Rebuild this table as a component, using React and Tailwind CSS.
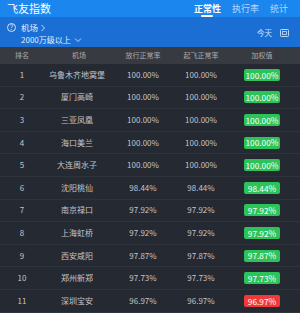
import React from "react";

const rows = [
  ["1", "乌鲁木齐地窝堡", "100.00%", "100.00%", "100.00%", "g"],
  ["2", "厦门高崎", "100.00%", "100.00%", "100.00%", "g"],
  ["3", "三亚凤凰", "100.00%", "100.00%", "100.00%", "g"],
  ["4", "海口美兰", "100.00%", "100.00%", "100.00%", "g"],
  ["5", "大连周水子", "100.00%", "100.00%", "100.00%", "g"],
  ["6", "沈阳桃仙", "98.44%", "98.44%", "98.44%", "g"],
  ["7", "南京禄口", "97.92%", "97.92%", "97.92%", "g"],
  ["8", "上海虹桥", "97.92%", "97.92%", "97.92%", "g"],
  ["9", "西安咸阳", "97.87%", "97.87%", "97.87%", "g"],
  ["10", "郑州新郑", "97.73%", "97.73%", "97.73%", "g"],
  ["11", "深圳宝安", "96.97%", "96.97%", "96.97%", "r"],
];

const font = { fontFamily: '"Noto Sans CJK SC", "Noto Sans", sans-serif' };

export default function App() {
  return (
    <div className="w-[300px] h-[313px] overflow-hidden bg-[#252932]" style={font}>
      <div className="h-[17px] bg-[#1c86ef] flex items-center pl-[7px] pr-[12px]">
        <div className="text-white text-[11px] leading-none">飞友指数</div>
        <div className="ml-auto flex items-center gap-[11px] text-[9px] leading-none">
          <div className="relative text-white font-bold">
            正常性
            <div className="absolute left-1/2 -translate-x-1/2 top-[11px] w-[12px] h-[2px] bg-white rounded" />
          </div>
          <div className="text-[#b9d7fb]">执行率</div>
          <div className="text-[#b9d7fb]">统计</div>
        </div>
      </div>
      <div className="h-[30px] bg-[#1b6fd4] flex pl-[7px] pr-[11px]">
        <div className="flex flex-col pt-[5px]">
          <div className="flex items-center h-[11px]">
            <div className="w-[9px] h-[9px] rounded-full border border-[#cfe2fb] text-[#cfe2fb] text-[7px] leading-none flex items-center justify-center">?</div>
            <span className="text-[#e3eefc] text-[8.5px] leading-none ml-[5px]">机场</span>
            <svg width="6" height="8" viewBox="0 0 6 8" className="ml-[2px]"><path d="M1.5 1 L4.5 4 L1.5 7" fill="none" stroke="#cfe2fb" strokeWidth="0.9" /></svg>
          </div>
          <div className="flex items-center gap-[3px] h-[11px] mt-[1px] pl-[14px]">
            <span className="text-[#e3eefc] text-[8px] leading-none">2000万级以上</span>
            <svg width="8" height="6" viewBox="0 0 8 6"><path d="M1 1.5 L4 4.5 L7 1.5" fill="none" stroke="#cfe2fb" strokeWidth="0.9" /></svg>
          </div>
        </div>
        <div className="ml-auto flex items-center gap-[8px] h-[16px] mt-[8px]">
          <span className="text-[#cfe2fb] text-[7.5px] leading-none">今天</span>
          <svg width="9" height="8" viewBox="0 0 9 8"><rect x="0.5" y="0.5" width="8" height="7" rx="0.8" fill="none" stroke="#cfe2fb" strokeWidth="0.9" /><rect x="2.5" y="2.6" width="4" height="2.8" fill="none" stroke="#cfe2fb" strokeWidth="0.8" /></svg>
        </div>
      </div>
      <div className="h-[17px] bg-[#373a41] grid grid-cols-[44px_66px_66px_48px_76px] items-center text-[7px] leading-none text-[#a9abb0] text-center">
        <div>排名</div>
        <div className="pl-[4px]">机场</div>
        <div>放行正常率</div>
        <div className="pl-[2px]">起飞正常率</div>
        <div>加权值</div>
      </div>
      {rows.map((r) => (
        <div key={r[0]} className="h-[22.6px] border-b border-[#2f333b] grid grid-cols-[44px_66px_66px_48px_76px] items-center text-[8px] leading-none text-[#c3c5ca] text-center whitespace-nowrap">
          <div>{r[0]}</div>
          <div>{r[1]}</div>
          <div>{r[2]}</div>
          <div className="pl-[2px]">{r[3]}</div>
          <div className="flex justify-center">
            <div className={(r[5] === "g" ? "bg-[#2bc35a]" : "bg-[#f03a3a]") + " text-white w-[36px] h-[12px] rounded-[2px] flex items-center justify-center text-[8.3px]"}>{r[4]}</div>
          </div>
        </div>
      ))}
    </div>
  );
}
